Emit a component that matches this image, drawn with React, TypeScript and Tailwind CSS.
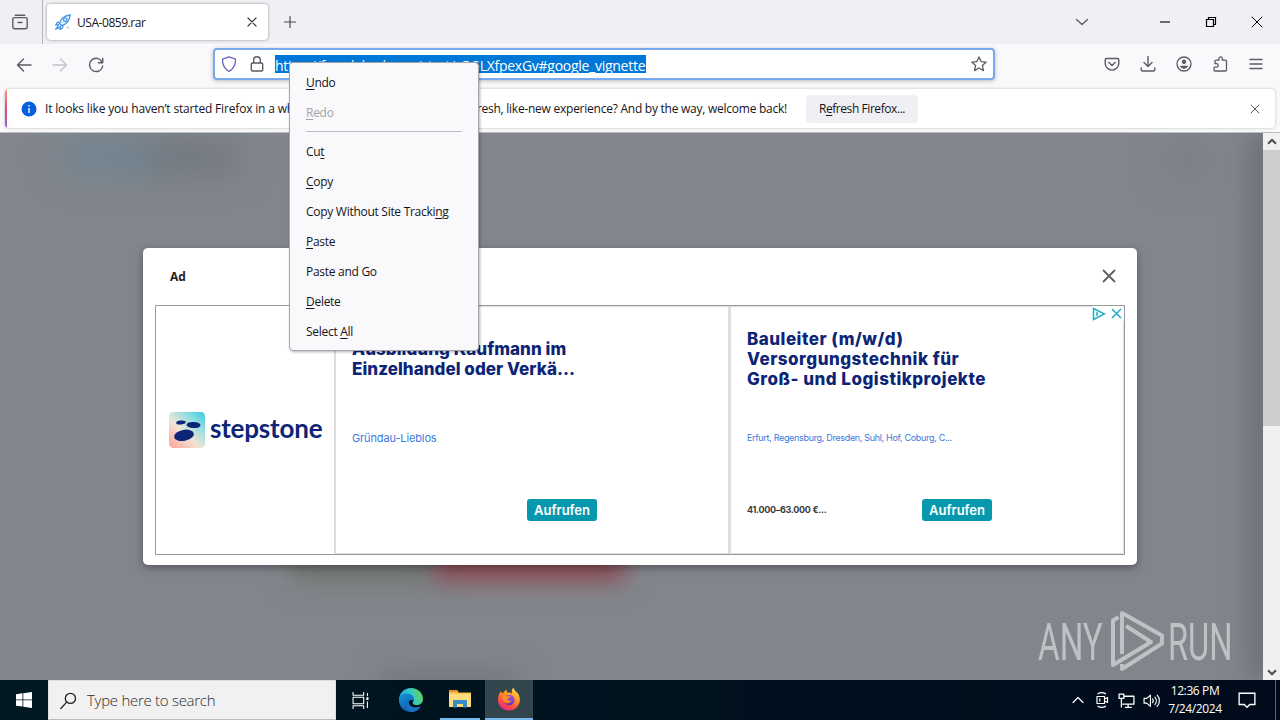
import type { ReactNode } from "react";
import clsx from "clsx";

type IconProps = { size?: number; className?: string; children: ReactNode };

// 16px grid line icon
const Icon = ({ size = 16, className, children }: IconProps) => (
  <svg
    width={size}
    height={size}
    viewBox="0 0 16 16"
    fill="none"
    stroke="currentColor"
    strokeWidth="1.2"
    strokeLinecap="round"
    strokeLinejoin="round"
    className={clsx("shrink-0", className)}
  >
    {children}
  </svg>
);

const menuItems = [
  { before: "", key: "U", after: "ndo" },
  { before: "", key: "R", after: "edo", disabled: true },
  null,
  { before: "Cu", key: "t", after: "" },
  { before: "", key: "C", after: "opy" },
  { before: "Copy Without Site Tracki", key: "n", after: "g" },
  { before: "", key: "P", after: "aste" },
  { before: "Paste and Go", key: "", after: "" },
  { before: "", key: "D", after: "elete" },
  { before: "Select ", key: "A", after: "ll" },
];

const ContextMenu = () => (
  <div className="absolute left-[289px] top-[62px] z-20 h-[289px] w-[190px] rounded-[4px] border border-[#a5a6ad] bg-[#f9f9fb] pt-[5px] text-[12px] tracking-[-0.28px] text-[#15141a] shadow-[1px_1px_3px_rgba(0,0,0,0.3)]">
    {menuItems.map((item, i) =>
      item ? (
        <div key={i} className={clsx("flex h-[30px] items-center whitespace-pre pl-4", item.disabled && "text-[#a3a3a9]")}>
          <span>
            {item.before}
            <span className="underline underline-offset-2">{item.key}</span>
            {item.after}
          </span>
        </div>
      ) : (
        <div key={i} className="mx-4 mb-[5px] mt-[3px] h-px bg-[#babac0]" />
      )
    )}
  </div>
);

const TabBar = () => (
  <div className="flex h-[44px] items-center bg-[#f0f0f4] text-[#5b5b66]">
    <div className="flex h-full w-[43px] items-center border-r border-[#b4b4bb] pl-3">
      <Icon>
        <path d="M3.2 1.3h9.6M2.2 3.6h11.6a1.4 1.4 0 0 1 1.4 1.4v7.8a2 2 0 0 1-2 2H2.8a2 2 0 0 1-2-2V5a1.4 1.4 0 0 1 1.4-1.4zM6 8.500h4" strokeWidth="1.4" />
      </Icon>
    </div>
    <div className="ml-1 flex h-[36px] w-[221px] items-center rounded-[4px] bg-white pl-2 pr-2 shadow-[0_0_3px_rgba(0,0,0,0.4)]">
      <svg width="16" height="16" viewBox="0 0 16 16" fill="none" stroke="#3a8fe0" strokeWidth="1.2">
        <path d="M4.5 9.5C5 5.500 9 1.500 15.300.800 14.800 7 10.500 11 6.500 11.700zM5 8 2.300 8.300.800 11l3.200-.4M8 11.200 7.700 14l-2.700 1.500.3-3.500M3.500 11.500 1 15l3.700-1.500" fill="#d8ecff" />
        <circle cx="10.300" cy="5.700" r="1.700" fill="white" />
        <path d="M12.500 13.500h1" strokeWidth="1.600" />
      </svg>
      <span className="ml-[6px] flex-1 pt-px text-[12px] tracking-[-0.45px] text-[#15141a]">USA-0859.rar</span>
      <Icon className="text-[#3c3c44]">
        <path d="m4 4 8 8m0-8-8 8" />
      </Icon>
    </div>
    <Icon className="ml-[14px] text-[#4a4a52]">
      <path d="M8 2.500v11M2.500 8h11" />
    </Icon>
    <div className="flex-1" />
    <Icon className="mr-[67px]">
      <path d="m2.500 5.500 5.500 5 5.500-5" strokeWidth="1.400" />
    </Icon>
    <div className="flex items-center gap-[30px] pr-[15px] text-black">
      <Icon><path d="M3 8h10" strokeWidth="1.100" strokeLinecap="butt" /></Icon>
      <Icon>
        <path d="M3.500 5.500h7v7h-7zM5.500 5.500v-2h7v7h-2" strokeLinejoin="miter" />
      </Icon>
      <Icon><path d="m3 3 10 10m0-10L3 13" strokeWidth="1" /></Icon>
    </div>
  </div>
);

const NavBar = () => (
  <div className="flex h-[44px] items-start bg-[#f9f9fb] pt-1 text-[#5b5b66]">
    <div className="flex h-8 w-[213px] items-center gap-5 pl-4 pt-px">
      <Icon><path d="M15 8H1.500m6-6L1.500 8l6 6" strokeWidth="1.400" /></Icon>
      <Icon className="text-[#c3c3c9]"><path d="M1 8h13.500m-6-6 6 6-6 6" strokeWidth="1.400" /></Icon>
      <Icon><path d="M14 4.800A6.600 6.600 0 1 0 14.700 9M14.700 1.500v4.300h-4.300" strokeWidth="1.400" /></Icon>
    </div>
    <div className="flex h-8 w-[782px] items-center rounded-[4px] border-2 border-[#78a9ee] bg-white px-[6px] shadow-[0_1px_4px_rgba(0,0,0,0.25)]">
      <Icon className="text-[#6a63c4]">
        <path d="M8 .8 14.500 3.200C14.600 9 12.500 13.200 8 15.300 3.500 13.200 1.400 9 1.500 3.200z" strokeWidth="1.300" />
      </Icon>
      <Icon className="ml-3">
        <path d="M3.500 7h9a1.200 1.200 0 0 1 1.200 1.200v5.600a1.200 1.200 0 0 1-1.200 1.200h-9a1.200 1.200 0 0 1-1.200-1.200V8.200A1.200 1.200 0 0 1 3.500 7zM4.700 7V4a3.300 3.300 0 0 1 6.600 0v3" strokeWidth="1.400" />
      </Icon>
      <div className="ml-[10px] flex h-[18px] w-[371px] items-center whitespace-nowrap bg-[#0078d7] pt-[2px] text-[14px] tracking-[-0.27px] text-white">
        https://freedakasl.com/start/x5GLXfpexGv#google_vignette
      </div>
      <div className="flex-1" />
      <Icon>
        <path d="m8 .9 2.100 4.700 5.100.5-3.800 3.500 1.100 5L8 12l-4.500 2.600 1.100-5L.8 6.100l5.100-.5z" strokeWidth="1.300" />
      </Icon>
    </div>
    <div className="flex h-8 flex-1 items-center justify-end gap-5 pr-4">
      <Icon><path d="M2.500 2.500h11c.8 0 1.300.5 1.300 1.300v3.500a6.800 6.800 0 0 1-13.600 0V3.800c0-.8.5-1.300 1.300-1.300zM4.800 6.500 8 9.500l3.200-3" strokeWidth="1.400" /></Icon>
      <Icon><path d="M8 .5v10m-4-4 4 4 4-4M1.200 12v1.500a1.500 1.500 0 0 0 1.500 1.500h10.600a1.500 1.500 0 0 0 1.500-1.500V12" strokeWidth="1.400" /></Icon>
      <Icon>
        <circle cx="8" cy="8" r="7" strokeWidth="1.300" />
        <circle cx="8" cy="5.800" r="2.200" fill="currentColor" stroke="none" />
        <path d="M4 9.800h8c-.5 1.800-2 2.900-4 2.900s-3.500-1.100-4-2.900z" fill="currentColor" stroke="none" />
      </Icon>
      <Icon><path d="M3 15h10.500a1 1 0 0 0 1-1V5.200a1 1 0 0 0-1-1H10.300V2.600a1.700 1.700 0 0 0-3.400 0v1.600H4a1 1 0 0 0-1 1v2.500h1.500a1.700 1.700 0 0 1 0 3.400H3a1 1 0 0 0-1 1V14a1 1 0 0 0 1 1z" strokeWidth="1.300" /></Icon>
      <Icon><path d="M2 3.500h12M2 8h12M2 12.500h12" strokeWidth="1.300" /></Icon>
    </div>
  </div>
);

const Notification = () => (
  <div className="flex h-[45px] items-start border-b border-[#b9bcc2] bg-[#f9f9fb] px-[5px]">
    <div className="mt-px flex h-[39px] w-full items-center overflow-hidden rounded-[4px] bg-white text-[12px] text-[#15141a] shadow-[0_0_3px_rgba(0,0,0,0.25)]">
      <div className="h-full w-[2px] bg-linear-to-b from-[#ff9a62] via-[#e0457b] to-[#9059c8]" />
      <svg width="16" height="16" viewBox="0 0 16 16" className="ml-[14px] shrink-0">
        <circle cx="8" cy="8" r="7.500" fill="#0560df" />
        <path d="M8 4v1.400M8 7v5" stroke="white" strokeWidth="1.400" />
      </svg>
      <span className="ml-2 w-[761px] whitespace-nowrap pt-px tracking-[-0.17px]">
        It looks like you haven’t started Firefox in a wh
        <span className="tracking-[-0.47px]">ile. Do you want to clean it up for a f</span>
        <span className="tracking-[-0.25px]">resh, like-new experience? And by the way, welcome back!</span>
      </span>
      <button className="h-7 w-[112px] rounded-[4px] bg-[#f0f0f4] pt-px tracking-[-0.43px]">
        R<span className="underline underline-offset-2">e</span>fresh Firefox...
      </button>
      <div className="flex-1" />
      <Icon className="mr-3 text-[#5b5b66]"><path d="m4 4 8 8m0-8-8 8" strokeWidth="1" /></Icon>
    </div>
  </div>
);

const StepstoneLogo = () => (
  <div className="flex w-[178px] items-center pl-[13px]">
    <svg width="36" height="36" viewBox="0 0 36 36" className="shrink-0">
      <defs>
        <linearGradient id="stone" x1="1" y1="0" x2="0.1" y2="1">
          <stop offset="0" stopColor="#35cbe0" />
          <stop offset="0.300" stopColor="#94dfdf" />
          <stop offset="0.600" stopColor="#eee4d6" />
          <stop offset="1" stopColor="#ffaa9f" />
        </linearGradient>
      </defs>
      <rect width="36" height="36" rx="4.500" fill="url(#stone)" />
      <ellipse cx="12" cy="10.500" rx="4.800" ry="2" fill="#0c2577" transform="rotate(-5 12 10.500)" />
      <ellipse cx="24.500" cy="13" rx="7" ry="3.100" fill="#0c2577" transform="rotate(3 24.500 13)" />
      <ellipse cx="15" cy="23.300" rx="10" ry="5.500" fill="#0c2577" transform="rotate(-11 15 23.300)" />
    </svg>
    <span className="mb-1 ml-[5px] font-['Lato'] text-[26px] font-bold leading-9 tracking-[-0.2px] text-[#0c2577]">stepstone</span>
  </div>
);

type JobProps = { title: string[]; place: string; salary?: string; small?: boolean };

const JobAd = ({ title, place, salary, small }: JobProps) => (
  <div className="flex h-full flex-col pl-4 font-['Inter']">
    <div
      className={clsx(
        "flex h-[104px] flex-col justify-center font-extrabold leading-5 text-[#0c2577]",
        small ? "text-[17px] tracking-[0.5px]" : "text-[17px] tracking-[0.05px]"
      )}
    >
      {title.map((line) => (
        <div key={line} className="whitespace-nowrap">{line}</div>
      ))}
    </div>
    <div
      className={clsx(
        "mt-[17px] flex h-5 items-center whitespace-nowrap text-[#3b7ae0]",
        small ? "text-[9px] tracking-[-0.32px]" : "text-[11px] tracking-[-0.13px]"
      )}
    >
      {place}
    </div>
    <div className="mt-[51px] flex h-[22px] items-center">
      <span className="w-[175px] text-[9px] font-bold tracking-[-0.3px] text-[#3c3c3c]">{salary}</span>
      <button className="h-[22px] w-[70px] rounded-[3px] bg-[#0798ae] pt-px text-[13px] font-semibold text-white">Aufrufen</button>
    </div>
  </div>
);

const AdModal = () => (
  <div className="absolute left-[143px] top-[248px] z-10 h-[317px] w-[994px] rounded-[5px] bg-white px-3 shadow-[0_3px_8px_rgba(0,0,0,0.35)]">
    <div className="flex h-[57px] items-center justify-between pl-[15px] pr-[8px]">
      <span className="text-[12px] font-bold text-[#222]">Ad</span>
      <Icon size={16} className="mb-px text-[#5f6368]"><path d="m2 2 12 12m0-12L2 14" strokeWidth="1.900" strokeLinecap="butt" /></Icon>
    </div>
    <div className="relative flex h-[250px] w-[970px] border border-[#9b9b9b]">
      <StepstoneLogo />
      <div className="w-[397px] border border-r-[3px] border-l-2 border-[#dedede]">
        <JobAd title={["Ausbildung Kaufmann im", "Einzelhandel oder Verkä..."]} place="Gründau-Lieblos" />
      </div>
      <div className="flex-1 border-b border-r border-t border-[#dedede]">
        <JobAd
          title={["Bauleiter (m/w/d)", "Versorgungstechnik für", "Groß- und Logistikprojekte"]}
          place="Erfurt, Regensburg, Dresden, Suhl, Hof, Coburg, C..."
          salary="41.000–63.000 €..."
          small
        />
      </div>
      <div className="absolute right-0 top-0 flex h-[15px] w-8 items-center justify-between bg-white text-[#18b0cc]">
        <svg width="14" height="14" viewBox="0 0 14 14" fill="none" stroke="currentColor" strokeWidth="1.500">
          <path d="M1.500 1.500v11l11-5.500zM5 5v4" />
        </svg>
        <svg width="13" height="13" viewBox="0 0 13 13" stroke="currentColor" strokeWidth="1.500">
          <path d="m1 2 9 9m0-9-9 9" />
        </svg>
      </div>
    </div>
  </div>
);

const Watermark = () => (
  <div className="absolute left-[1038px] top-[609px] flex h-[64px] items-center font-['Roboto'] text-[51px] font-normal leading-[62px] text-[#bfc1c4]">
    <span className="w-[72px] origin-left scale-x-[0.65] pt-[3px]">ANY</span>
    <svg width="56" height="64" viewBox="0 0 56 64" fill="none" stroke="currentColor" strokeWidth="4" strokeLinejoin="round" className="shrink-0">
      <path d="M8.500 8 3 11.500V56L41 33 16 17" />
      <path d="M12 45V4L52 26.500V30" />
      <path d="M52 29v5.500L12 60v-5" />
    </svg>
    <span className="ml-[2px] w-[60px] origin-left scale-x-[0.64] pt-[3px]">RUN</span>
  </div>
);

const PageContent = () => (
  <div className="flex h-[547px]">
    <div className="relative flex-1 overflow-hidden bg-[#82868c]">
      {/* page behind the vignette overlay */}
      <div className="absolute left-[62px] top-3 h-[26px] w-[100px] bg-[#6b8493] blur-lg" />
      <div className="absolute left-[150px] top-3 h-[26px] w-[88px] bg-[#6f757d] blur-lg" />
      <div className="absolute left-[1170px] top-3 h-8 w-9 bg-[#787d84] blur-lg" />
      <div className="absolute left-[290px] top-[415px] h-[34px] w-[150px] bg-[#707570] blur-md" />
      <div className="absolute left-[435px] top-[410px] h-[38px] w-[190px] bg-[#8c4953] blur-md" />
      <div className="absolute left-[380px] top-[538px] h-6 w-[140px] bg-[#72777e] blur-md" />
      <div className="absolute -right-2 top-0 h-full w-5 bg-[#666a70] blur-md" />
    </div>
    <div className="flex w-[17px] flex-col bg-[#f0f0f0] text-[#505050]">
      <div className="flex h-[17px] items-center justify-center">
        <Icon size={14}><path d="m3.500 10 4.500-4.500 4.500 4.500" strokeWidth="2.400" strokeLinecap="butt" /></Icon>
      </div>
      <div className="h-[276px] bg-[#cdcdcd]" />
      <div className="flex-1" />
      <div className="flex h-[17px] items-center justify-center">
        <Icon size={14}><path d="m3.500 6 4.500 4.500L12.500 6" strokeWidth="2.400" strokeLinecap="butt" /></Icon>
      </div>
    </div>
  </div>
);

const EdgeIcon = () => (
  <svg width="26" height="26" viewBox="0 0 26 26">
    <defs>
      <linearGradient id="edgeTop" x1="0" y1="0.600" x2="1" y2="0.300">
        <stop offset="0" stopColor="#1b9de0" />
        <stop offset="0.500" stopColor="#31c6cf" />
        <stop offset="1" stopColor="#65d64f" />
      </linearGradient>
      <linearGradient id="edgeBody" x1="0" y1="0" x2="0.600" y2="1">
        <stop offset="0" stopColor="#1595d8" />
        <stop offset="1" stopColor="#0f55ad" />
      </linearGradient>
    </defs>
    <path d="M1 13C1 6 6 1 13 1s12 5 12 11c0 4-3 6-6.500 6-3 0-4.500-1.500-3.500-3 1.500-2.500 0-6-4-6-5 0-8 5-6 10C2.500 18 1 15.500 1 13z" fill="url(#edgeTop)" />
    <path d="M1 13c0-4 4-6.500 8-6.500 4.500 0 7.500 3 6.500 7-3-1.500-5 0-4.700 2.500C11.300 20 17 22 22.500 19.500 20 23.500 17 25 13 25 6 25 1 20 1 13z" fill="url(#edgeBody)" />
    <path d="M10.800 16C11.300 20 17 22 22.500 19.500 20 23.500 17 25 13 25c-4-1.500-6-6-2.200-9z" fill="#1a73c4" />
  </svg>
);

const ExplorerIcon = () => (
  <svg width="22" height="20" viewBox="0 0 22 20">
    <path d="M0 1.500h8l1.500 2H22V18H0z" fill="#f7c64a" />
    <path d="M0 1h8.500l1 2H0z" fill="#e8902b" />
    <path d="M0 5h22v13H0z" fill="#fcdc7d" />
    <path d="M4 18.500V11h14v7.500h-4V15H8v3.500z" fill="#3a8cc9" />
  </svg>
);

const FirefoxIcon = () => (
  <svg width="24" height="24" viewBox="0 0 24 24">
    <defs>
      <linearGradient id="fox" x1="0.800" y1="0" x2="0.250" y2="1">
        <stop offset="0" stopColor="#ffe44a" />
        <stop offset="0.400" stopColor="#ff9320" />
        <stop offset="0.750" stopColor="#ff4648" />
        <stop offset="1" stopColor="#e2278e" />
      </linearGradient>
      <linearGradient id="globe" x1="0.600" y1="0" x2="0.400" y2="1">
        <stop offset="0" stopColor="#a557e8" />
        <stop offset="1" stopColor="#5634b0" />
      </linearGradient>
    </defs>
    <path d="M3.500 4.500 6 6.500c.8-1.800 2-3 3.500-4-.2 1.200.3 2.300 1.200 3 2-.2 3 .2 4.200 1.200-.5-2.300 0-4.700 1.600-6 .3 2 2 3.200 3.500 4.800 2.500 2.700 3.500 6.200 2.500 10-1.300 4.800-5.500 8-10.500 8C6 23.500 1 19 1 13c0-3.500.8-6 2.500-8.500z" fill="url(#fox)" />
    <circle cx="12.300" cy="13" r="5.300" fill="url(#globe)" />
    <path d="M5.500 9c2-1 4-.6 5.200.4 1.200-.2 2.300.1 2.800.6-.6.900-2 1.100-2.800 1.800-.4 1.700 1.600 2.700 3.800 1.600-1 3-5 3.800-7 1.600C6 13.500 5.300 11 5.500 9z" fill="#ff8a25" />
  </svg>
);

const Taskbar = () => (
  <div className="flex h-10 items-stretch bg-linear-to-r from-[#001822] to-[#000b1b] text-white">
    <div className="flex w-12 items-center justify-center">
      <svg width="16" height="16" viewBox="0 0 16 16" fill="white">
        <path d="M0 2.200 6.500 1.300v6.200H0zM7.300 1.200 16 0v7.500H7.300zM0 8.300h6.500v6.300L0 13.700zM7.300 8.300H16V16l-8.700-1.200z" />
      </svg>
    </div>
    <div className="flex w-[288px] items-center border border-b-[#bcbcbc] border-[#dedede] bg-[#f1f1f1] pl-[11px] text-[#222]">
      <Icon size={17}><circle cx="9.800" cy="6" r="4.800" /><path d="m6.300 9.500-5.500 6" /></Icon>
      <span className="ml-[10px] text-[15px] font-light tracking-[-0.28px] text-[#2d2d2d]">Type here to search</span>
    </div>
    <div className="flex w-12 items-center justify-center">
      <Icon size={17}>
        <path d="M1 0v3h10V0M1 16v-3h10v3M1 5h10v6H1zM14.500 1v3M14.500 9v6" strokeLinecap="butt" strokeWidth="1" />
        <path d="M14.500 5v2.500" strokeWidth="2" strokeLinecap="butt" />
      </Icon>
    </div>
    <div className="flex w-[54px] items-center justify-center"><EdgeIcon /></div>
    <div className="ml-[2px] flex w-10 items-center justify-center border-b-2 border-[#76b9ed]"><ExplorerIcon /></div>
    <div className="ml-[5px] flex w-12 items-center justify-center border-b-2 border-[#76b9ed] bg-[#33464e]"><FirefoxIcon /></div>
    <div className="flex-1" />
    <div className="flex items-center gap-2">
      <Icon><path d="m3 10.500 5-5 5 5" /></Icon>
      <Icon>
        <path d="M3 4.500h7.500v7H3zM10.500 7l3-1.500v5l-3-1.500M4 1.800c2-1.500 5.500-1.500 7.500 0M4 14.200c2 1.500 5.500 1.500 7.500 0" />
        <path d="M5.800 7v2" strokeWidth="1.300" />
      </Icon>
      <Icon size={17}>
        <path d="M5.500 4H15v7.500H4M9.500 11.500V14M6.500 14.500h6.500M1 2h4.500v4H1zM3.200 6v8.500" strokeLinecap="butt" />
      </Icon>
      <Icon size={17}>
        <path d="M1 6h2.500L7 3v10.500L3.500 10.500H1zM9 6.500c.8 1 .8 2.500 0 3.500M11.200 4.800c1.800 2 1.800 5 0 7M13.300 3c2.800 3 2.800 7.500 0 10.500" strokeWidth="1.100" />
      </Icon>
    </div>
    <div className="ml-[7px] flex w-[56px] flex-col justify-center whitespace-nowrap text-center text-[12px] leading-[18px] tracking-[-0.38px]">
      <div>12:36 PM</div>
      <div>7/24/2024</div>
    </div>
    <div className="ml-[14px] flex w-[39px] items-center border-r border-[#5a6470] pl-px">
      <Icon size={18}><path d="M1 2h14v10h-4.500L8 14.500 5.500 12H1z" strokeLinejoin="miter" /></Icon>
    </div>
    <div className="w-1" />
  </div>
);

const App = () => {
  return (
    <div className="relative h-[720px] w-[1280px] overflow-hidden font-['Open_Sans','Noto_Sans',sans-serif]">
      <TabBar />
      <NavBar />
      <Notification />
      <PageContent />
      <Taskbar />
      <AdModal />
      <Watermark />
      <ContextMenu />
    </div>
  );
};

export default App;
